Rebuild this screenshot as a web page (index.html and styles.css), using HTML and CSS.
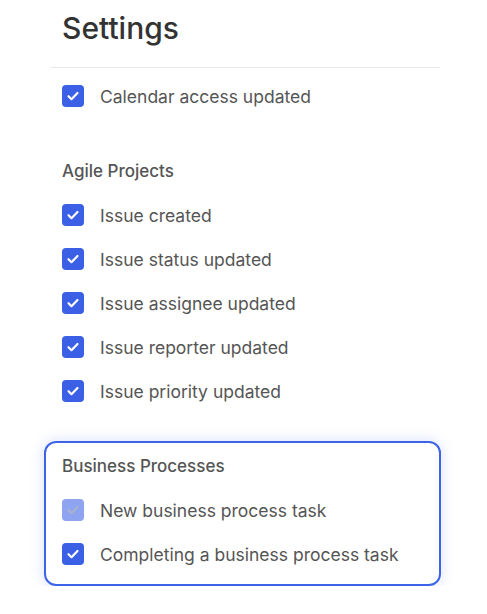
FILE: index.html
```html
<!DOCTYPE html>
<html>
<head>
<meta charset="utf-8">
<link rel="stylesheet" href="styles.css">
</head>
<body>
<div class="page">
  <div class="header"><h1 class="title">Settings</h1></div>
  <div class="list">
    <div class="row"><span class="cb"><svg viewBox="0 0 22 22"><path d="M6.5 11.2l3 3 6-6.2" /></svg></span><span class="label">Calendar access updated</span></div>
  </div>
  <div class="section">
    <div class="sec-title">Agile Projects</div>
    <div class="row"><span class="cb"><svg viewBox="0 0 22 22"><path d="M6.5 11.2l3 3 6-6.2" /></svg></span><span class="label">Issue created</span></div>
    <div class="row"><span class="cb"><svg viewBox="0 0 22 22"><path d="M6.5 11.2l3 3 6-6.2" /></svg></span><span class="label">Issue status updated</span></div>
    <div class="row"><span class="cb"><svg viewBox="0 0 22 22"><path d="M6.5 11.2l3 3 6-6.2" /></svg></span><span class="label">Issue assignee updated</span></div>
    <div class="row"><span class="cb"><svg viewBox="0 0 22 22"><path d="M6.5 11.2l3 3 6-6.2" /></svg></span><span class="label">Issue reporter updated</span></div>
    <div class="row"><span class="cb"><svg viewBox="0 0 22 22"><path d="M6.5 11.2l3 3 6-6.2" /></svg></span><span class="label">Issue priority updated</span></div>
  </div>
  <div class="section boxed">
    <div class="sec-title">Business Processes</div>
    <div class="row"><span class="cb disabled"><svg viewBox="0 0 22 22"><path d="M6.5 11.2l3 3 6-6.2" /></svg></span><span class="label">New business process task</span></div>
    <div class="row"><span class="cb"><svg viewBox="0 0 22 22"><path d="M6.5 11.2l3 3 6-6.2" /></svg></span><span class="label">Completing a business process task</span></div>
  </div>
</div>
</body>
</html>
```
FILE: styles.css
```css
html, body {
  margin: 0;
  padding: 0;
  background: #ffffff;
}
body {
  font-family: Inter, "Noto Sans", sans-serif;
  color: #555555;
}
.page {
  width: 389px;
  margin-left: 51px;
}
.header {
  height: 68px;
  border-bottom: 1px solid #e8e8ee;
  box-sizing: border-box;
  padding-left: 11px;
  display: flex;
  align-items: flex-start;
}
.title {
  margin: 8px 0 0 0;
  font-size: 30px;
  font-weight: 500;
  color: #333333;
  line-height: 40px;
}
.list {
  padding-top: 6px;
}
.section {
  margin-top: 31px;
}
.sec-title {
  height: 44px;
  display: flex;
  align-items: center;
  padding-left: 11px;
  font-size: 17px;
  font-weight: 500;
  color: #555555;
}
.row {
  height: 44px;
  display: flex;
  align-items: center;
  padding-left: 11px;
}
.cb {
  width: 22px;
  height: 22px;
  border-radius: 4px;
  background: #3b5fe5;
  display: flex;
  flex: none;
}
.cb svg {
  width: 22px;
  height: 22px;
  fill: none;
  stroke: #ffffff;
  stroke-width: 2.2;
  stroke-linecap: round;
  stroke-linejoin: round;
}
.cb.disabled {
  background: #8ea4f0;
}
.cb.disabled svg {
  stroke: #a8b2cc;
}
.label {
  margin-left: 16px;
  font-size: 17.5px;
  color: #555555;
}
.boxed {
  margin-top: 28px;
  margin-left: -7px;
  margin-right: -1px;
  padding: 1px 0 8px 5px;
  border: 2px solid #3d63e8;
  border-radius: 12px;
  box-shadow: 0 0 14px rgba(80, 110, 230, 0.22);
}
```
